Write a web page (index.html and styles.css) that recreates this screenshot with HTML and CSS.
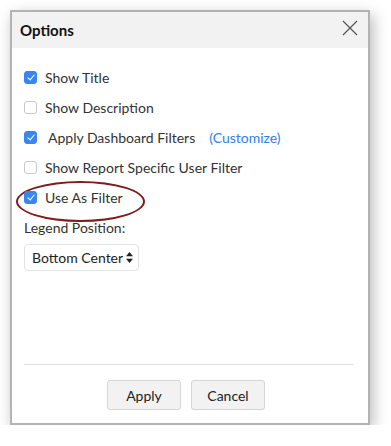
FILE: index.html
```html
<!DOCTYPE html>
<html lang="en">
<head>
    <meta charset="UTF-8">
    <title>Options</title>
    <link rel="stylesheet" href="styles.css">
</head>
<body>
    <div class="dialog">
        <div class="header">
            <h1>Options</h1>
            <span class="close">
                <svg width="16" height="16" viewBox="0 0 16 16"><path d="M1 1L15 15M15 1L1 15" stroke="#555" stroke-width="1.2" fill="none"/></svg>
            </span>
        </div>

        <div class="content">
            <label class="option-item">
                <span class="checkbox checked"></span>
                <span>Show Title</span>
            </label>
            <label class="option-item">
                <span class="checkbox"></span>
                <span>Show Description</span>
            </label>
            <label class="option-item">
                <span class="checkbox checked"></span>
                <span class="wide">Apply Dashboard Filters</span>
                <a class="link">(Customize)</a>
            </label>
            <label class="option-item">
                <span class="checkbox"></span>
                <span>Show Report Specific User Filter</span>
            </label>
            <label class="option-item highlight">
                <span class="checkbox checked"></span>
                <span>Use As Filter</span>
            </label>

            <div class="field-label">Legend Position:</div>
            <div class="select">
                <span>Bottom Center</span>
                <svg width="7" height="11" viewBox="0 0 7 11"><path d="M3.5 0L7 4.2H0Z M3.5 11L0 6.8H7Z" fill="#222"/></svg>
            </div>
        </div>

        <div class="footer">
            <button class="btn">Apply</button>
            <button class="btn">Cancel</button>
        </div>
    </div>
</body>
</html>
```

FILE: styles.css
```css
* {
    margin: 0;
    padding: 0;
    box-sizing: border-box;
}

body {
    font-family: Lato, "Open Sans", sans-serif;
    background: #fff;
    color: #333;
    padding: 10px 0 0 10px;
}

.dialog {
    width: 360px;
    height: 415px;
    border: 2px solid #b3b3b3;
    background: #fff;
    box-shadow: 3px 5px 14px rgba(0, 0, 0, 0.28);
    display: flex;
    flex-direction: column;
}

.header {
    height: 36px;
    background: #f2f2f2;
    display: flex;
    align-items: center;
    justify-content: space-between;
    padding: 0 10px 0 8px;
}

.header h1 {
    font-size: 15px;
    font-weight: 700;
    color: #111;
}

.close {
    display: flex;
    margin-top: -4px;
}

.content {
    flex: 1;
    padding: 14px 12px 0 12px;
}

.option-item {
    position: relative;
    display: flex;
    align-items: center;
    height: 30px;
    font-size: 14px;
    color: #333;
}

.checkbox {
    width: 13px;
    height: 13px;
    border: 1px solid #c9c9c9;
    border-radius: 3px;
    margin-right: 8px;
    position: relative;
    background: #fff;
}

.checkbox.checked {
    background: #3a86f0;
    border-color: #3a86f0;
}

.checkbox.checked::after {
    content: '';
    position: absolute;
    left: 3.5px;
    top: 1px;
    width: 3px;
    height: 6px;
    border: solid #fff;
    border-width: 0 1.5px 1.5px 0;
    transform: rotate(40deg);
}

.wide {
    margin-left: 3px;
}

.link {
    color: #2f80ed;
    margin-left: 14px;
}

.highlight::before {
    content: '';
    position: absolute;
    left: -8px;
    top: -1px;
    width: 125px;
    height: 37px;
    border: 2px solid #7d1d1d;
    border-radius: 50%;
}

.field-label {
    font-size: 14px;
    height: 30px;
    display: flex;
    align-items: center;
}

.select {
    margin-top: 2px;
    display: inline-flex;
    align-items: center;
    gap: 3px;
    height: 27px;
    padding: 0 5px 0 7px;
    border: 1px solid #e3e3e3;
    border-radius: 4px;
    font-size: 14px;
    color: #222;
}

.footer {
    margin: 0 14px 0 12px;
    border-top: 1px solid #e2e2e2;
    display: flex;
    justify-content: center;
    gap: 10px;
    padding: 15px 6px 13px 0;
}

.btn {
    width: 74px;
    height: 30px;
    background: #f2f2f2;
    border: 1px solid #d6d6d6;
    border-radius: 3px;
    font-family: Lato, "Open Sans", sans-serif;
    font-size: 14px;
    color: #222;
}
```
